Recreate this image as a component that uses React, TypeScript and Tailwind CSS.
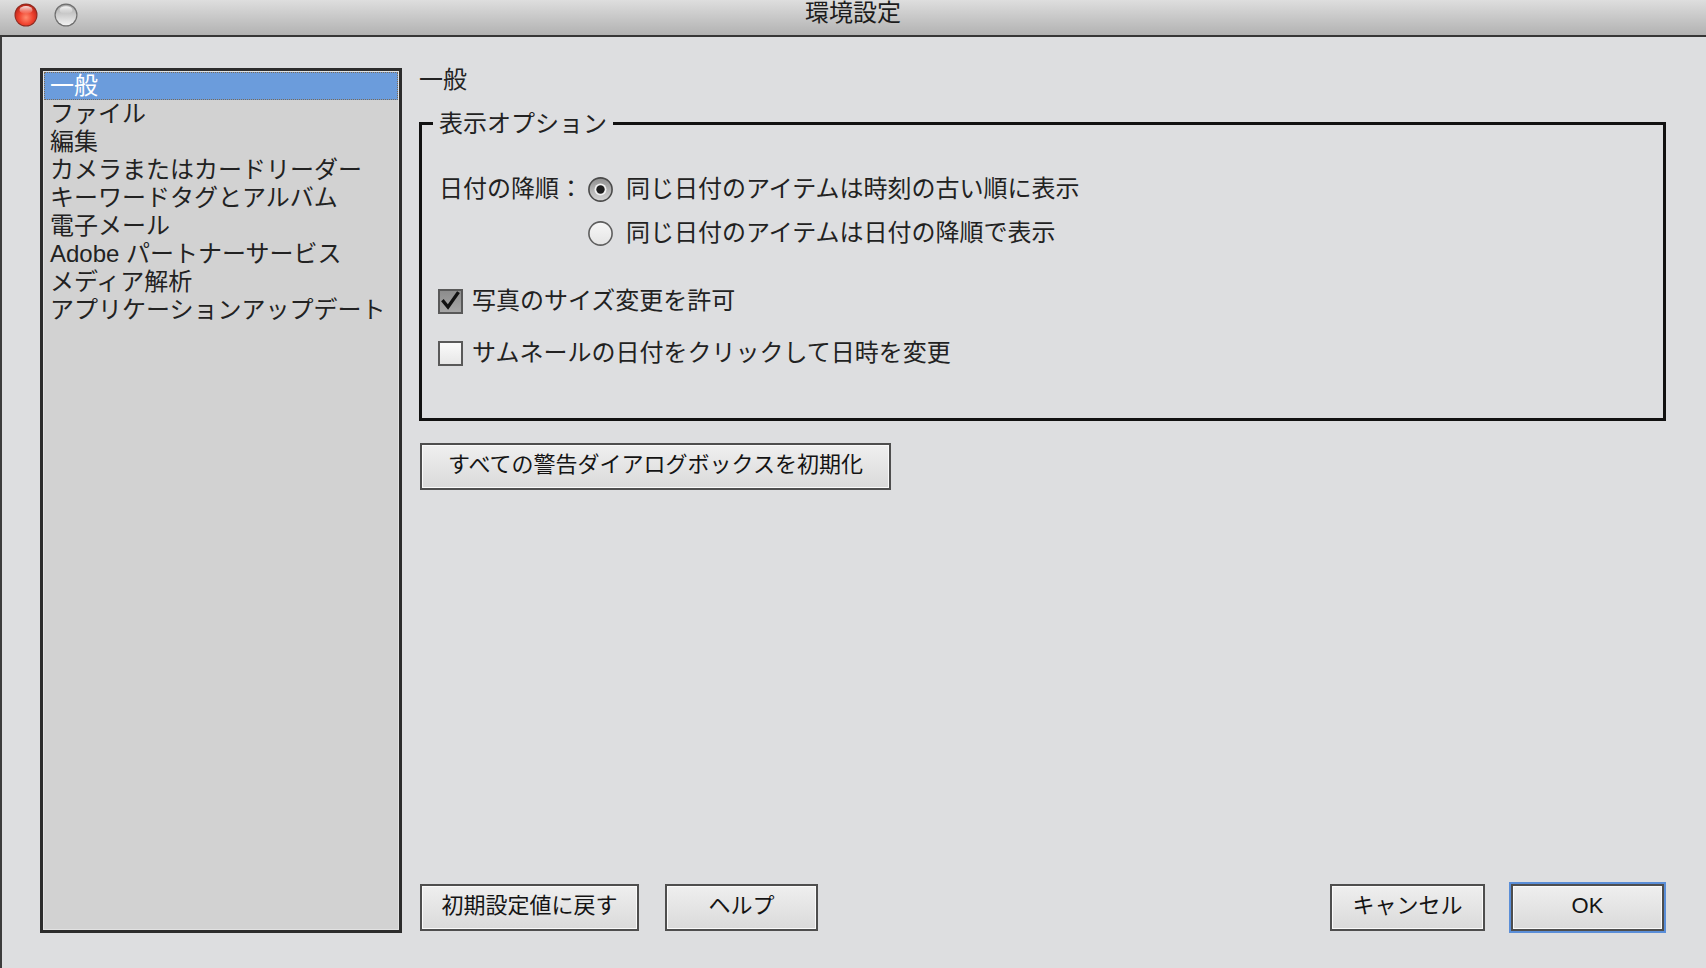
import React from "react";

const FONT = "font-['Liberation_Sans','Noto_Sans_CJK_JP',sans-serif]";

function TrafficLight({ kind }: { kind: "close" | "idle" }) {
  if (kind === "close") {
    return (
      <svg width="24" height="24" viewBox="0 0 24 24">
        <defs>
          <radialGradient id="redBody" cx="50%" cy="62%" r="60%">
            <stop offset="0%" stopColor="#ff8a6e" />
            <stop offset="55%" stopColor="#f0432f" />
            <stop offset="100%" stopColor="#b8261a" />
          </radialGradient>
          <linearGradient id="redShine" x1="0" y1="0" x2="0" y2="1">
            <stop offset="0%" stopColor="#ffffff" stopOpacity="0.85" />
            <stop offset="100%" stopColor="#ffffff" stopOpacity="0" />
          </linearGradient>
        </defs>
        <circle cx="12" cy="12" r="11.5" fill="#8a2a20" />
        <circle cx="12" cy="12" r="10.6" fill="url(#redBody)" />
        <ellipse cx="12" cy="7" rx="6.5" ry="4" fill="url(#redShine)" />
      </svg>
    );
  }
  return (
    <svg width="24" height="24" viewBox="0 0 24 24">
      <defs>
        <linearGradient id="grayBody" x1="0" y1="0" x2="0" y2="1">
          <stop offset="0%" stopColor="#a9a9a9" />
          <stop offset="100%" stopColor="#f2f2f2" />
        </linearGradient>
        <linearGradient id="grayShine" x1="0" y1="0" x2="0" y2="1">
          <stop offset="0%" stopColor="#ffffff" stopOpacity="0.9" />
          <stop offset="100%" stopColor="#ffffff" stopOpacity="0" />
        </linearGradient>
      </defs>
      <circle cx="12" cy="12" r="11.5" fill="#6e6e6e" />
      <circle cx="12" cy="12" r="10.3" fill="url(#grayBody)" />
      <ellipse cx="12" cy="7" rx="6.5" ry="3.8" fill="url(#grayShine)" />
    </svg>
  );
}

function TitleBar() {
  return (
    <div className="h-[37px] shrink-0 grid grid-cols-[1fr_auto_1fr] bg-gradient-to-b from-[#dedede] to-[#b2b2b2] border-b-2 border-[#363636]">
      <div className="flex items-start gap-[16px] pl-[14px] pt-[3px]">
        <TrafficLight kind="close" />
        <TrafficLight kind="idle" />
      </div>
      <div className="text-[24px] leading-[26px] text-[#1c1c1c]">環境設定</div>
      <div />
    </div>
  );
}

const categories = [
  "一般",
  "ファイル",
  "編集",
  "カメラまたはカードリーダー",
  "キーワードタグとアルバム",
  "電子メール",
  "Adobe パートナーサービス",
  "メディア解析",
  "アプリケーションアップデート",
];

function CategoryList() {
  return (
    <div className="w-[362px] shrink-0 border-[3px] border-[#2c2c2c] bg-[#d2d2d2] p-[1px] shadow-[inset_0_0_0_1px_#e2e2e2]">
      {categories.map((c, i) =>
        i === 0 ? (
          <div
            key={c}
            className="h-[28px] pl-[5px] text-[24px] leading-[25px] text-white bg-[#6b9cdc] border border-dotted border-[#7a6a55]"
          >
            {c}
          </div>
        ) : (
          <div key={c} className="h-[28px] pl-[6px] text-[24px] leading-[27px] text-[#222]">
            {c}
          </div>
        )
      )}
    </div>
  );
}

function Radio({ checked }: { checked: boolean }) {
  return (
    <svg width="25" height="25" viewBox="0 0 25 25" className="shrink-0">
      <defs>
        <linearGradient id="radioOn" x1="0" y1="0" x2="0" y2="1">
          <stop offset="0%" stopColor="#8e8e8e" />
          <stop offset="100%" stopColor="#d6d6d6" />
        </linearGradient>
        <linearGradient id="radioOff" x1="0" y1="0" x2="0" y2="1">
          <stop offset="0%" stopColor="#f7f7f7" />
          <stop offset="100%" stopColor="#e4e4e4" />
        </linearGradient>
      </defs>
      <circle cx="12.5" cy="12.5" r="11.6" fill={checked ? "url(#radioOn)" : "url(#radioOff)"} stroke={checked ? "#4a4a4a" : "#5d5d5d"} strokeWidth="1.6" />
      {checked && (
        <>
          <circle cx="12.5" cy="12.5" r="6" fill="#f1f1f1" />
          <circle cx="12.5" cy="12.5" r="4.2" fill="#1d1d1d" />
        </>
      )}
    </svg>
  );
}

function Checkbox({ checked }: { checked: boolean }) {
  return (
    <svg width="25" height="25" viewBox="0 0 25 25" className="shrink-0">
      <defs>
        <linearGradient id="boxOn" x1="0" y1="0" x2="0" y2="1">
          <stop offset="0%" stopColor="#8b8b8b" />
          <stop offset="100%" stopColor="#a8a8a8" />
        </linearGradient>
        <linearGradient id="boxOff" x1="0" y1="0" x2="0" y2="1">
          <stop offset="0%" stopColor="#fbfbfb" />
          <stop offset="100%" stopColor="#e6e6e6" />
        </linearGradient>
      </defs>
      <rect x="1" y="1" width="23" height="23" fill={checked ? "url(#boxOn)" : "url(#boxOff)"} stroke="#595959" strokeWidth="2" />
      {checked && (
        <path d="M5.5 12.5 L10 18 L19.5 4.5" fill="none" stroke="#111" strokeWidth="3.4" strokeLinecap="square" strokeLinejoin="miter" />
      )}
    </svg>
  );
}

function MacButton({
  label,
  className,
  focused,
}: {
  label: string;
  className: string;
  focused?: boolean;
}) {
  return (
    <button
      className={
        "h-[47px] shrink-0 border-2 border-[#4e4e4e] bg-gradient-to-b from-[#efefef] to-[#dadada] pb-[4px] text-[22px] leading-none text-[#141414] shadow-[inset_0_0_0_1px_#fafafa] " +
        (focused ? "outline-2 outline-[#5a8ed8] " : "") +
        className
      }
    >
      {label}
    </button>
  );
}

function GeneralPanel() {
  return (
    <div className="w-[1247px] flex flex-col">
      <div className="h-[24px] text-[24px] leading-[24px] text-[#222]">一般</div>

      <div className="relative mt-[30px] h-[299px] border-[3px] border-[#111] pl-[16px] pt-[50px]">
        <div className="absolute -top-[15px] left-[11px] bg-[#dddee0] px-[6px] text-[24px] leading-[28px] text-[#222]">
          表示オプション
        </div>

        <div className="flex items-center h-[28px] text-[24px] leading-[28px] text-[#222]">
          <span className="w-[150px] shrink-0 pl-[1px]">日付の降順：</span>
          <Radio checked />
          <span className="ml-[13px]">同じ日付のアイテムは時刻の古い順に表示</span>
        </div>
        <div className="flex items-center h-[28px] mt-[16px] pl-[150px] text-[24px] leading-[28px] text-[#222]">
          <Radio checked={false} />
          <span className="ml-[13px]">同じ日付のアイテムは日付の降順で表示</span>
        </div>

        <div className="flex items-center h-[28px] mt-[40px] text-[24px] leading-[28px] text-[#222]">
          <Checkbox checked />
          <span className="ml-[9px]">写真のサイズ変更を許可</span>
        </div>
        <div className="flex items-center h-[28px] mt-[24px] text-[24px] leading-[28px] text-[#222]">
          <Checkbox checked={false} />
          <span className="ml-[9px]">サムネールの日付をクリックして日時を変更</span>
        </div>
      </div>

      <MacButton label="すべての警告ダイアログボックスを初期化" className="mt-[22px] ml-[1px] w-[471px]" />

      <div className="flex-1" />

      <div className="flex items-center pb-[2px]">
        <MacButton label="初期設定値に戻す" className="ml-[1px] w-[219px]" />
        <MacButton label="ヘルプ" className="ml-[26px] w-[153px]" />
        <MacButton label="キャンセル" className="ml-auto w-[155px]" />
        <MacButton label="OK" className="ml-[26px] mr-[2px] w-[153px]" focused />
      </div>
    </div>
  );
}

export default function App() {
  return (
    <div className={"w-[1706px] h-[968px] bg-[#dddee0] flex flex-col overflow-hidden " + FONT}>
      <TitleBar />
      <div className="flex-1 flex gap-[17px] border-l-2 border-[#3c3c3c] pl-[38px] pt-[31px] pb-[35px]">
        <CategoryList />
        <GeneralPanel />
      </div>
    </div>
  );
}
